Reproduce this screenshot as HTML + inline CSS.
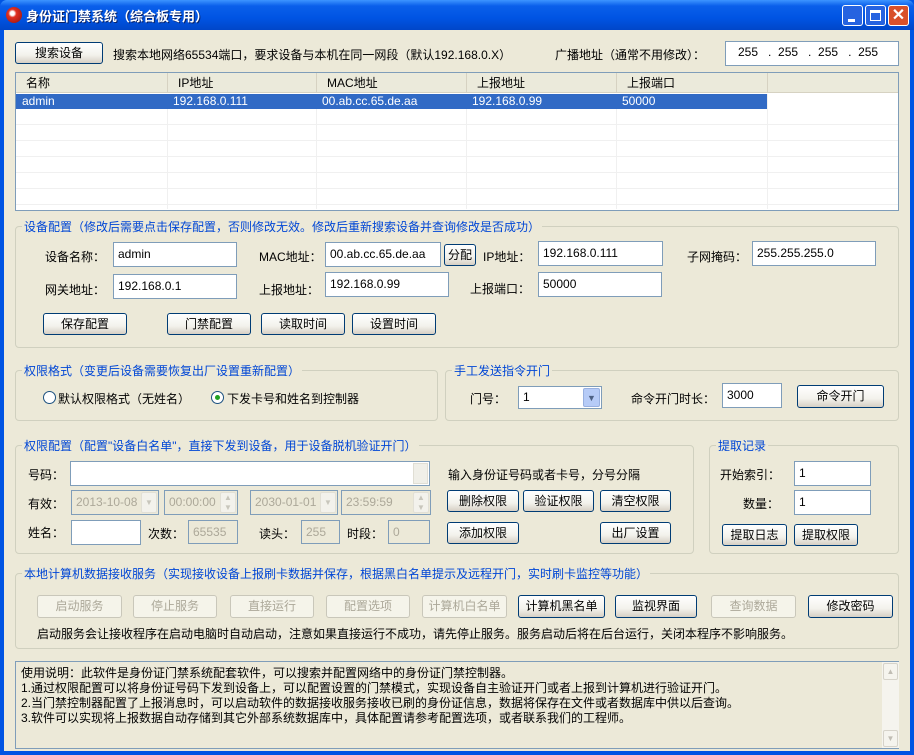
<!DOCTYPE html>
<html><head><meta charset="utf-8"><style>
*{margin:0;padding:0;box-sizing:border-box}
body{width:914px;height:755px;background:#0054E3;font:12px "Liberation Sans","Noto Sans CJK SC",sans-serif;color:#000;position:relative;overflow:hidden}
.a{position:absolute;white-space:nowrap}
.win{position:absolute;left:4px;top:30px;width:906px;height:721px;background:#ECE9D8}
.tb{position:absolute;left:0;top:0;width:914px;height:30px;background:linear-gradient(#3D95FF,#0A5FEA 20%,#0054E3 60%,#0046C8);border-radius:7px 7px 0 0}
.btn{position:absolute;border:1px solid #003C74;border-radius:3px;background:linear-gradient(#FFF,#F3F2EC 60%,#D6D0C5);text-align:center;font-size:12px;line-height:20px}
.dis{border-color:#C9C7BA;background:#F5F4EA;color:#ACA899}
.tx{position:absolute;border:1px solid #7F9DB9;background:#fff;padding-left:4px;line-height:22px}
.td{background:#ECE9D8;color:#ACA899}
.grp{position:absolute;border:1px solid #D0D0BF;border-radius:4px}
.gt{position:absolute;color:#0046D5;background:#ECE9D8;padding:0 2px;top:-9px;left:6px;white-space:nowrap}
.col{position:absolute;top:0;height:20px;border-right:1px solid #D6D2C2;padding-left:10px;line-height:20px}
.sp{position:absolute;width:16px;height:21px;border:1px solid #E2E0D6;border-radius:2px;background:#F3F2EC;color:#C8C6BC;font-size:8px;text-align:center;line-height:19px}
</style></head><body>
<div class="tb"></div>
<div class="a" style="left:6px;top:7px;width:16px;height:16px;border-radius:50%;background:radial-gradient(circle at 40% 40%,#fff 15%,#E03020 30%,#901010)"></div>
<div class="a" style="left:26px;top:6px;color:#fff;font-weight:bold;font-size:13px;text-shadow:1px 1px #0A246A">身份证门禁系统（综合板专用）</div>
<div class="a" style="left:842px;top:5px;width:21px;height:21px;border:1px solid #fff;border-radius:3px;background:#2663E0"><div class="a" style="left:5px;top:13px;width:7px;height:3px;background:#fff"></div></div>
<div class="a" style="left:865px;top:5px;width:21px;height:21px;border:1px solid #fff;border-radius:3px;background:#2663E0"><div class="a" style="left:4px;top:4px;width:11px;height:11px;border:1px solid #fff;border-top-width:3px"></div></div>
<div class="a" style="left:888px;top:5px;width:21px;height:21px;border:1px solid #fff;border-radius:3px;background:#D8502A;color:#fff;font-weight:bold;font-size:16px;text-align:center;line-height:19px">✕</div>
<div class="win"></div>

<div class="btn" style="left:15px;top:42px;width:88px;height:22px">搜索设备</div>
<div class="a" style="left:113px;top:46px">搜索本地网络65534端口，要求设备与本机在同一网段（默认192.168.0.X）</div>
<div class="a" style="left:555px;top:46px">广播地址（通常不用修改）：</div>
<div class="tx" style="left:725px;top:41px;width:174px;height:25px;line-height:20px;padding-left:12px">255 &nbsp;&nbsp;. &nbsp;255 &nbsp;&nbsp;. &nbsp;255 &nbsp;&nbsp;. &nbsp;255</div>

<div class="a" style="left:15px;top:72px;width:884px;height:139px;border:1px solid #7F9DB9;background:#fff;overflow:hidden">
<div class="a" style="left:0;top:0;width:882px;height:20px;background:#EBEADB;border-bottom:1px solid #D6D2C2"></div>
<div class="col" style="left:0;width:152px">名称</div>
<div class="col" style="left:152px;width:149px">IP地址</div>
<div class="col" style="left:301px;width:150px">MAC地址</div>
<div class="col" style="left:451px;width:150px">上报地址</div>
<div class="col" style="left:601px;width:151px">上报端口</div>
<div class="a" style="left:0;top:21px;width:752px;height:15px;background:#316AC5;color:#fff;line-height:15px">
<span class="a" style="left:6px">admin</span><span class="a" style="left:157px">192.168.0.111</span><span class="a" style="left:306px">00.ab.cc.65.de.aa</span><span class="a" style="left:456px">192.168.0.99</span><span class="a" style="left:606px">50000</span></div>
<div class="a" style="left:0;top:36px;width:882px;height:100px;background:repeating-linear-gradient(#fff 0 15px,#F0F0F0 15px 16px)"></div>
<div class="a" style="left:151px;top:36px;width:1px;height:100px;background:#F0F0F0"></div>
<div class="a" style="left:300px;top:36px;width:1px;height:100px;background:#F0F0F0"></div>
<div class="a" style="left:450px;top:36px;width:1px;height:100px;background:#F0F0F0"></div>
<div class="a" style="left:600px;top:36px;width:1px;height:100px;background:#F0F0F0"></div>
<div class="a" style="left:751px;top:21px;width:1px;height:115px;background:#F0F0F0"></div>
</div>

<div class="grp" style="left:15px;top:226px;width:884px;height:122px"><div class="gt">设备配置（修改后需要点击保存配置，否则修改无效。修改后重新搜索设备并查询修改是否成功）</div></div>
<div class="a" style="left:45px;top:248px">设备名称：</div><div class="tx" style="left:113px;top:242px;width:124px;height:25px">admin</div>
<div class="a" style="left:259px;top:248px">MAC地址：</div><div class="tx" style="left:325px;top:242px;width:116px;height:25px">00.ab.cc.65.de.aa</div>
<div class="btn" style="left:444px;top:244px;width:32px;height:22px">分配</div>
<div class="a" style="left:483px;top:248px">IP地址：</div><div class="tx" style="left:538px;top:241px;width:125px;height:25px">192.168.0.111</div>
<div class="a" style="left:687px;top:248px">子网掩码：</div><div class="tx" style="left:752px;top:241px;width:124px;height:25px">255.255.255.0</div>
<div class="a" style="left:45px;top:281px">网关地址：</div><div class="tx" style="left:113px;top:274px;width:124px;height:25px">192.168.0.1</div>
<div class="a" style="left:259px;top:281px">上报地址：</div><div class="tx" style="left:325px;top:272px;width:124px;height:25px">192.168.0.99</div>
<div class="a" style="left:470px;top:280px">上报端口：</div><div class="tx" style="left:538px;top:272px;width:124px;height:25px">50000</div>
<div class="btn" style="left:43px;top:313px;width:84px;height:22px">保存配置</div>
<div class="btn" style="left:167px;top:313px;width:84px;height:22px">门禁配置</div>
<div class="btn" style="left:261px;top:313px;width:84px;height:22px">读取时间</div>
<div class="btn" style="left:352px;top:313px;width:84px;height:22px">设置时间</div>

<div class="grp" style="left:15px;top:370px;width:423px;height:51px"><div class="gt">权限格式（变更后设备需要恢复出厂设置重新配置）</div></div>
<div class="a" style="left:43px;top:391px;width:13px;height:13px;border:1px solid #1C5180;border-radius:50%;background:#fff"></div>
<div class="a" style="left:58px;top:390px">默认权限格式（无姓名）</div>
<div class="a" style="left:211px;top:391px;width:13px;height:13px;border:1px solid #1C5180;border-radius:50%;background:#fff"><div class="a" style="left:3px;top:3px;width:5px;height:5px;border-radius:50%;background:#21A121"></div></div>
<div class="a" style="left:227px;top:390px">下发卡号和姓名到控制器</div>

<div class="grp" style="left:445px;top:370px;width:454px;height:51px"><div class="gt">手工发送指令开门</div></div>
<div class="a" style="left:470px;top:390px">门号：</div>
<div class="tx" style="left:518px;top:386px;width:84px;height:23px;line-height:21px">1</div>
<div class="a" style="left:583px;top:388px;width:17px;height:19px;background:#B6CBF7;border:1px solid #98B0E0;border-radius:2px;color:#4D6185;font-size:9px;text-align:center;line-height:18px">▼</div>
<div class="a" style="left:631px;top:390px">命令开门时长：</div>
<div class="tx" style="left:722px;top:383px;width:60px;height:25px">3000</div>
<div class="btn" style="left:797px;top:385px;width:87px;height:23px">命令开门</div>

<div class="grp" style="left:15px;top:445px;width:679px;height:109px"><div class="gt">权限配置（配置"设备白名单"，直接下发到设备，用于设备脱机验证开门）</div></div>
<div class="a" style="left:28px;top:466px">号码：</div>
<div class="tx" style="left:70px;top:461px;width:360px;height:25px"></div>
<div class="a" style="left:413px;top:463px;width:15px;height:21px;background:#F0EFE8;border:1px solid #E0DED4"></div>
<div class="a" style="left:448px;top:466px">输入身份证号码或者卡号，分号分隔</div>
<div class="a" style="left:28px;top:495px">有效：</div>
<div class="tx td" style="left:71px;top:490px;width:88px;height:25px">2013-10-08</div><div class="sp" style="left:141px;top:492px">▼</div>
<div class="tx td" style="left:164px;top:490px;width:74px;height:25px">00:00:00</div><div class="sp" style="left:220px;top:492px;line-height:10px">▲<br>▼</div>
<div class="tx td" style="left:250px;top:490px;width:88px;height:25px">2030-01-01</div><div class="sp" style="left:320px;top:492px">▼</div>
<div class="tx td" style="left:341px;top:490px;width:90px;height:25px">23:59:59</div><div class="sp" style="left:413px;top:492px;line-height:10px">▲<br>▼</div>
<div class="a" style="left:28px;top:524px">姓名：</div>
<div class="tx" style="left:71px;top:520px;width:70px;height:25px"></div>
<div class="a" style="left:148px;top:525px">次数：</div><div class="tx td" style="left:188px;top:520px;width:50px;height:24px">65535</div>
<div class="a" style="left:259px;top:525px">读头：</div><div class="tx td" style="left:301px;top:520px;width:39px;height:24px">255</div>
<div class="a" style="left:347px;top:525px">时段：</div><div class="tx td" style="left:388px;top:520px;width:42px;height:24px">0</div>
<div class="btn" style="left:447px;top:490px;width:72px;height:22px">删除权限</div>
<div class="btn" style="left:523px;top:490px;width:71px;height:22px">验证权限</div>
<div class="btn" style="left:600px;top:490px;width:71px;height:22px">清空权限</div>
<div class="btn" style="left:447px;top:522px;width:72px;height:22px">添加权限</div>
<div class="btn" style="left:600px;top:522px;width:71px;height:22px">出厂设置</div>

<div class="grp" style="left:709px;top:445px;width:190px;height:109px"><div class="gt">提取记录</div></div>
<div class="a" style="left:720px;top:466px">开始索引：</div><div class="tx" style="left:794px;top:461px;width:77px;height:25px">1</div>
<div class="a" style="left:743px;top:495px">数量：</div><div class="tx" style="left:794px;top:490px;width:77px;height:25px">1</div>
<div class="btn" style="left:722px;top:524px;width:65px;height:22px">提取日志</div>
<div class="btn" style="left:794px;top:524px;width:64px;height:22px">提取权限</div>

<div class="grp" style="left:15px;top:573px;width:884px;height:76px"><div class="gt">本地计算机数据接收服务（实现接收设备上报刷卡数据并保存，根据黑白名单提示及远程开门，实时刷卡监控等功能）</div></div>
<div class="btn dis" style="left:37px;top:595px;width:85px;height:23px">启动服务</div>
<div class="btn dis" style="left:133px;top:595px;width:84px;height:23px">停止服务</div>
<div class="btn dis" style="left:230px;top:595px;width:84px;height:23px">直接运行</div>
<div class="btn dis" style="left:326px;top:595px;width:84px;height:23px">配置选项</div>
<div class="btn dis" style="left:422px;top:595px;width:85px;height:23px">计算机白名单</div>
<div class="btn" style="left:518px;top:595px;width:87px;height:23px">计算机黑名单</div>
<div class="btn" style="left:615px;top:595px;width:82px;height:23px">监视界面</div>
<div class="btn dis" style="left:711px;top:595px;width:85px;height:23px">查询数据</div>
<div class="btn" style="left:808px;top:595px;width:85px;height:23px">修改密码</div>
<div class="a" style="left:37px;top:625px">启动服务会让接收程序在启动电脑时自动启动，注意如果直接运行不成功，请先停止服务。服务启动后将在后台运行，关闭本程序不影响服务。</div>

<div class="a" style="left:15px;top:661px;width:884px;height:88px;border:1px solid #7F9DB9;background:#ECE9D8;padding:4px 0 0 5px;line-height:15px">使用说明：此软件是身份证门禁系统配套软件，可以搜索并配置网络中的身份证门禁控制器。<br>1.通过权限配置可以将身份证号码下发到设备上，可以配置设置的门禁模式，实现设备自主验证开门或者上报到计算机进行验证开门。<br>2.当门禁控制器配置了上报消息时，可以启动软件的数据接收服务接收已刷的身份证信息，数据将保存在文件或者数据库中供以后查询。<br>3.软件可以实现将上报数据自动存储到其它外部系统数据库中，具体配置请参考配置选项，或者联系我们的工程师。
<div class="a" style="left:866px;top:0;width:17px;height:86px;background:#F5F4EE"></div>
<div class="a" style="left:867px;top:1px;width:15px;height:17px;border:1px solid #D6D3CA;border-radius:2px;color:#C0BDB4;font-size:8px;text-align:center;line-height:15px">▲</div>
<div class="a" style="left:867px;top:68px;width:15px;height:17px;border:1px solid #D6D3CA;border-radius:2px;color:#C0BDB4;font-size:8px;text-align:center;line-height:15px">▼</div>
</div>
</body></html>
